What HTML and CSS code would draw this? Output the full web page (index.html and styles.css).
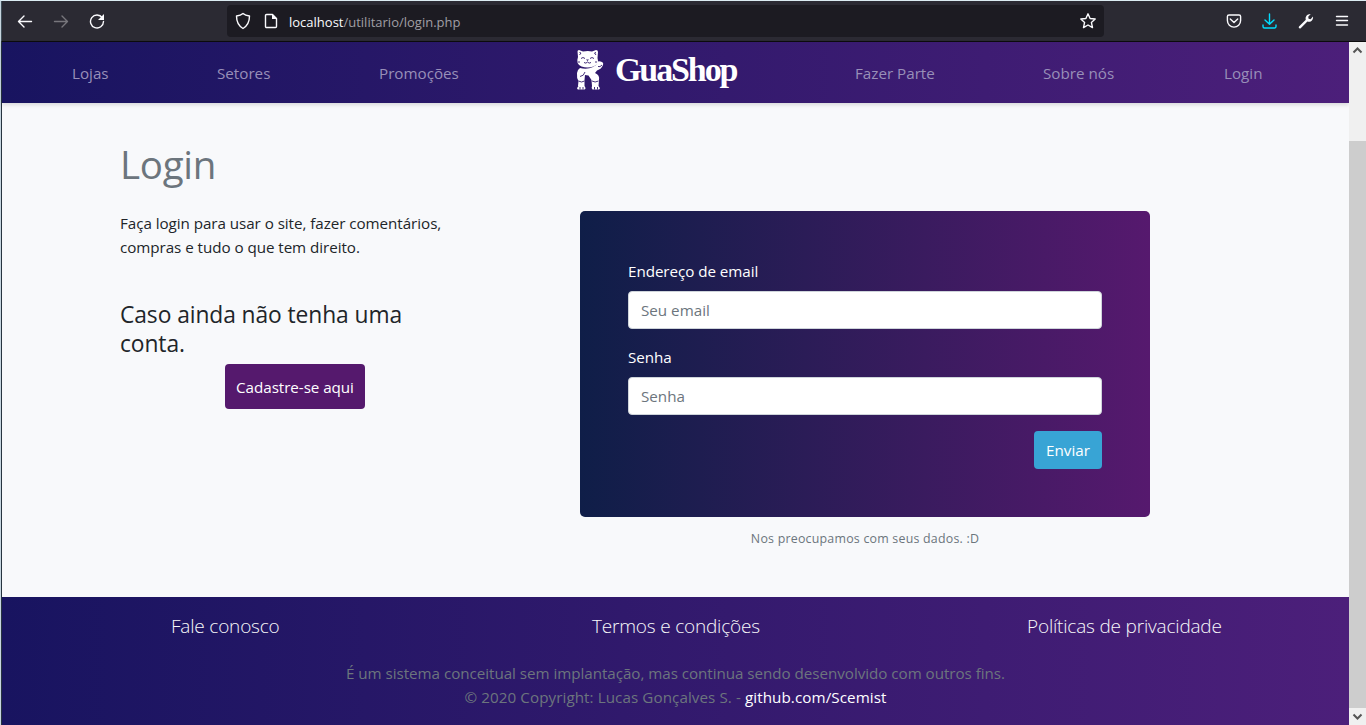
FILE: index.html
```html
<!DOCTYPE html>
<html lang="pt-BR">
<head>
<meta charset="utf-8">
<title>GuaShop - Login</title>
<link rel="stylesheet" href="styles.css">
</head>
<body>
<div class="window">
  <header class="toolbar">
    <div class="controls">
      <svg width="16" height="16" viewBox="0 0 16 16"><path d="M14.500 8.500H1.500M7 3L1.500 8.500 7 14"/></svg>
      <svg class="disabled" width="16" height="16" viewBox="0 0 16 16"><path d="M1.500 8.500h13M9 3l5.500 5.500L9 14"/></svg>
      <svg width="16" height="16" viewBox="0 0 16 16"><path d="M13.300 4.700A6.500 6.500 0 1 0 14.500 8.500"/><path class="solid" d="M15 1v6H9z"/></svg>
    </div>
    <div class="address">
      <svg width="16" height="18" viewBox="0 0 16 18"><path d="M8 1.500C6.300 3 3.800 3.700 1.500 4c0 6 1.500 9.500 6.500 12.500C13 13.500 14.500 10 14.500 4 12.200 3.700 9.700 3 8 1.500z"/></svg>
      <svg width="14" height="16" viewBox="0 0 14 16"><path d="M2.500 1.500h6l4 4v8a1 1 0 0 1-1 1h-9a1 1 0 0 1-1-1v-11a1 1 0 0 1 1-1z"/><path class="solid" d="M8 1l5 5H8z"/></svg>
      <span class="url">localhost<span>/utilitario/login.php</span></span>
      <svg class="star" width="18" height="18" viewBox="0 0 18 18"><path d="M9 1.800l2.100 4.700 5.100.5-3.800 3.400 1.100 5.200L9 13l-4.500 2.600 1.100-5.200L1.800 7l5.100-.5z"/></svg>
    </div>
    <div class="actions">
      <svg width="16" height="16" viewBox="0 0 16 16"><path d="M3 2h10a1.600 1.600 0 0 1 1.600 1.600V7.500a6.600 6.600 0 0 1-13.200 0V3.600A1.600 1.600 0 0 1 3 2zM4.300 6L8 9.600 11.700 6"/></svg>
      <svg class="download" width="16" height="16" viewBox="0 0 16 16"><path d="M7.500 1v10M3 7l4.500 4.300L12 7M1 12v1.500a1.500 1.500 0 0 0 1.500 1.500h10a1.500 1.500 0 0 0 1.500-1.500V12"/></svg>
      <svg width="16" height="16" viewBox="0 0 16 16"><path class="solid" d="M1 13.500L7.800 6.700C7 3.800 9 .9 12.700 1l-2.500 2.800.4 2 2 .4L15 3.500c.6 3.600-2.500 6.200-5.600 5L2.700 15.200C1.500 16 .1 14.700 1 13.500z"/></svg>
      <svg class="menu" width="16" height="16" viewBox="0 0 16 16"><path d="M2.500 3.500h11M2.500 7.500h11M2.500 12h11"/></svg>
    </div>
  </header>
  <div class="viewport">
    <div class="page">
      <nav class="navbar">
        <a>Lojas</a><a>Setores</a><a>Promoções</a>
        <a class="brand">
          <svg width="32" height="44" viewBox="0 0 32 44">
            <g fill="#fff">
              <path d="M4 9L3.500 3.500Q3.500 2 5 2l4 1.500q5-1 9 0L22 2q2 0 2 2l-.5 6q2 6-4 8.500-6 1.800-12 0Q1.500 16 4 9z"/>
              <path d="M6 20q7 2 13-1l3-2q1-5 4.500-3.500Q30 14 29 17q-1.500 4-6 5.500L21 25q5 2 4 7l-.5 6H18l-.5-6-3-4.500-3.500-.5-.5 5V38H4l.5-5q-2-3-1.500-8 0-3 3-5z"/>
              <path d="M4.500 38h6q2 3 0 3.500H4q-2-1 .5-3.500zM18 38h6.500q2.500 3 .5 3.500h-6.500q-1.500-1-.5-3.500z"/>
            </g>
            <g fill="none" stroke="#321b6c" stroke-width=".9">
              <path d="M5.500 4.500l1.500.5-1.500 2M22 4.500l-1.500.5L22 7M7 10.500q2-2 4 0M16 10.500q2-2 4 0M10 14.500q2 1.500 3.500-.5 1.500 2 3.500.5M4 14h2M21 14h2M11 24q-1 4-5 4.500M4.500 33q3 2 6 0M18 33q3 2 6.500 0M24 18.500q2 1 4-1.500M6 39v2.500M9 39v2.500M20.500 39v2.500M23.500 39v2.500"/>
            </g>
            <path fill="#321b6c" d="M12 11.500h3L13.500 13z"/>
          </svg>
          <span>GuaShop</span>
        </a>
        <a>Fazer Parte</a><a>Sobre nós</a><a>Login</a>
      </nav>
      <main class="content">
        <h1>Login</h1>
        <section class="intro">
          <p>Faça login para usar o site, fazer comentários,<br>compras e tudo o que tem direito.</p>
          <h2>Caso ainda não tenha uma<br>conta.</h2>
          <a class="register">Cadastre-se aqui</a>
        </section>
        <section class="login">
          <form class="card">
            <label for="email">Endereço de email</label>
            <input id="email" type="email" placeholder="Seu email">
            <label for="password">Senha</label>
            <input id="password" type="password" placeholder="Senha">
            <button type="button">Enviar</button>
          </form>
          <small>Nos preocupamos com seus dados. :D</small>
        </section>
      </main>
      <footer class="footer">
        <div class="links"><a>Fale conosco</a><a>Termos e condições</a><a>Políticas de privacidade</a></div>
        <p class="about">É um sistema conceitual sem implantação, mas continua sendo desenvolvido com outros fins.</p>
        <p class="copyright">© 2020 Copyright: Lucas Gonçalves S. - <a>github.com/Scemist</a></p>
      </footer>
    </div>
    <div class="scrollbar">
      <svg width="17" height="17" viewBox="0 0 17 17"><path d="M4.500 10.500l4-4 4 4"/></svg>
      <div class="thumb"></div>
      <svg width="17" height="17" viewBox="0 0 17 17"><path d="M4.500 6.500l4 4 4-4"/></svg>
    </div>
  </div>
</div>
</body>
</html>
```
FILE: styles.css
```css
* { box-sizing: border-box; }
body { margin: 0; font: 15.2px/24px "Open Sans", "Noto Sans", sans-serif; color: #212529; overflow: hidden; }
h1, h2, p { margin: 0; font-weight: 400; }
a { white-space: nowrap; }
.window { width: 1366px; height: 725px; border-top: 1px solid #dcecf3; border-left: 1px solid #c6d5df; display: flex; flex-direction: column; }
.toolbar { height: 41px; background: #2b2a33; border-bottom: 1px solid #0c0c0d; border-left: 1px solid #42505b; display: flex; align-items: center; flex: none; }
.toolbar svg { fill: none; stroke: #fbfbfe; stroke-width: 1.4; stroke-linecap: round; stroke-linejoin: round; flex: none; }
.toolbar .solid { fill: #fbfbfe; stroke: none; }
.toolbar .disabled { stroke: #77767c; }
.toolbar .download { stroke: #00ddff; }
.toolbar .menu { stroke-width: 1.4; }
.controls { width: 225px; padding-left: 15px; display: flex; gap: 20px; }
.address { width: 877px; height: 32px; background: #1c1b22; border-radius: 4px; display: flex; align-items: center; padding: 0 7px 0 8px; }
.address svg + svg { margin-left: 13px; }
.url { margin-left: 11px; padding-top: 1px; font-size: 13px; color: #fbfbfe; }
.url span { color: #a09fa5; }
.address .star { margin-left: auto; }
.actions { display: flex; align-items: center; gap: 20px; margin-left: 122px; }
.viewport { flex: 1; min-height: 0; display: flex; }
.page { width: 1348px; border-left: 1px solid #273440; background: #f8f9fb; display: flex; flex-direction: column; }
.navbar { height: 61px; flex: none; padding: 1px 0 0 70px; background: linear-gradient(90deg, #181460, #4c1f7a); box-shadow: 0 2px 4px rgba(0,0,0,.13); display: grid; grid-template-columns: 145px 162px 195px 281px 188px 181px 60px; align-items: center; color: #988fb8; }
.brand { display: flex; align-items: center; height: 44px; margin-top: -6px; color: #fff; }
.brand span { margin-left: 9px; font: bold 34px/42px "Liberation Serif", serif; letter-spacing: -2.1px; }
.content { height: 494px; flex: none; padding: 37px 0 0 118px; display: grid; grid-template-columns: 460px 570px; grid-template-rows: 71px 1fr; }
h1 { grid-column: 1 / 3; font-size: 38.5px; line-height: 48px; font-weight: 400; letter-spacing: -.3px; color: #6c757d; }
.intro { width: 350px; letter-spacing: -.05px; }
h2 { margin-top: 41px; font-size: 22.8px; line-height: 29px; letter-spacing: -.08px; }
.register { display: block; width: 140px; height: 45px; line-height: 47px; margin: 6px 0 0 105px; border-radius: 4px; background: #55196d; color: #fff; text-align: center; }
.login { text-align: center; }
.card { height: 306px; padding: 48px 48px 0; border-radius: 5px; background: linear-gradient(90deg, #0f1e48, #56196e); display: flex; flex-direction: column; align-items: flex-start; color: #fff; letter-spacing: -.05px; }
.card label { height: 24px; margin-bottom: 8px; }
.card input { width: 474px; height: 38px; flex: none; margin-bottom: 16px; padding: 0 12px; border: 1px solid #ced4da; border-radius: 4px; background: #fff; font: inherit; }
.card input::placeholder { color: #6c757d; opacity: 1; }
.card button { width: 68px; height: 38px; padding: 0; align-self: flex-end; border: 0; border-radius: 4px; background: #38a4d5; color: #fff; font: inherit; }
small { display: block; margin-top: 10px; font-size: 12.4px; letter-spacing: .22px; color: #6c757d; }
.footer { flex: 1; background: linear-gradient(90deg, #181460, #4c1f7a); padding-top: 17px; text-align: center; color: #6c757d; }
.links { height: 24px; padding-left: 169px; display: grid; grid-template-columns: 421px 435px 200px; text-align: left; font-size: 19px; letter-spacing: -.19px; font-weight: 300; color: #f8f9fa; }
.about { margin-top: 23px; letter-spacing: -.04px; }
.copyright { letter-spacing: .08px; }
.footer p a { color: #fff; }
.scrollbar { width: 17px; background: #f0f0f0; display: flex; flex-direction: column; }
.scrollbar svg { fill: none; stroke: #555; stroke-width: 2; flex: none; }
.thumb { flex: 1; margin-top: 82px; background: #cdcdcd; }
```
